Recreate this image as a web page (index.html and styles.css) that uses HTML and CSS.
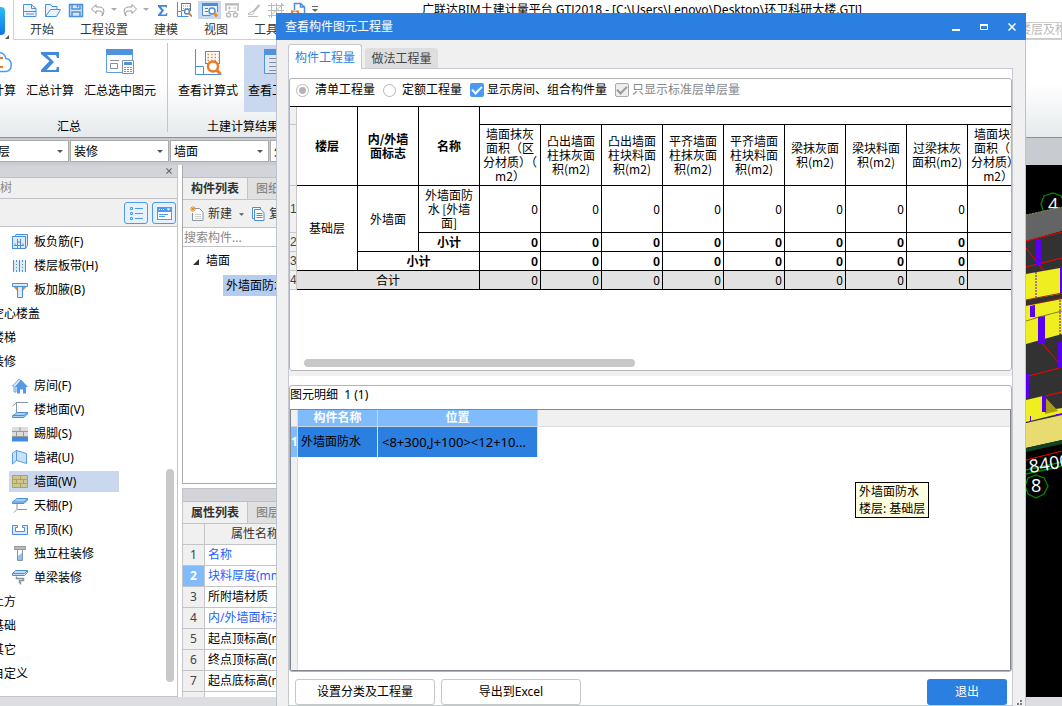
FILE: index.html
```html
<!DOCTYPE html>
<html lang="zh-CN">
<head>
<meta charset="utf-8">
<title>广联达BIM土建计量平台 GTJ2018</title>
<link rel="stylesheet" href="styles.css">
</head>
<body>
<div class="app">
  <header class="top">
    <div class="logo">
      <svg width="14" height="40" viewBox="0 0 14 40"><defs><linearGradient id="lg" x1="0" y1="0" x2="0" y2="1"><stop offset="0" stop-color="#29c0f5"/><stop offset="1" stop-color="#1273e6"/></linearGradient></defs><rect x="-20" y="7" width="25" height="28" rx="4" fill="url(#lg)"/><path d="M9 35v4H5z" fill="#555"/></svg>
    </div>
    <div class="top-rows">
      <div class="quick">
        <button class="qbtn" aria-label="新建"><svg width="16" height="16" viewBox="0 0 16 16" fill="none" stroke="#4a8fdc"><path d="M1.500 14.500V2.500h8l4.500 4v8z" fill="#eaf3fd"/><path d="M9.500 2.500v4h4.500M1.500 9.500h12.500M4 12h8"/></svg></button>
        <button class="qbtn" aria-label="打开"><svg width="18" height="16" viewBox="0 0 18 16" fill="none" stroke="#4a8fdc"><path d="M1.500 14.500v-12h5l1.500 2h5v3M1.500 14.500l5-7h10l-4 7z" fill="#eaf3fd"/></svg></button>
        <button class="qbtn" aria-label="保存"><svg width="16" height="16" viewBox="0 0 16 16" fill="none" stroke="#4a8fdc" stroke-width="1.500"><path d="M1.500 2.500h13v12h-13z" fill="#d9e9fb"/><path d="M4 2.500v4.500h8V2.500M4 14.500V10h8v4.500M9.500 3v2.500"/></svg></button>
        <button class="qbtn" aria-label="撤销"><svg width="16" height="16" viewBox="0 0 16 16" fill="none" stroke="#999"><path d="M6 2.500L1.500 7 6 11.500V9h3.500c2.500 0 3.500 1.500 2.500 5 3-4 2.500-9-2.500-9H6z"/></svg></button>
        <svg class="caret tight" width="6" height="4" viewBox="0 0 6 4"><path d="M0 0h6L3 3z" fill="#aaa"/></svg>
        <button class="qbtn" aria-label="重做"><svg width="16" height="16" viewBox="0 0 16 16" fill="none" stroke="#999"><path d="M10 2.500L14.500 7 10 11.500V9H6.500C4 9 3 10.500 4 14c-3-4-2.500-9 2.500-9H10z"/></svg></button>
        <svg class="caret tight" width="6" height="4" viewBox="0 0 6 4"><path d="M0 0h6L3 3z" fill="#aaa"/></svg>
        <button class="qbtn" aria-label="汇总"><svg width="16" height="16" viewBox="0 0 16 16"><path d="M4 3h9v2.500h-1l-.5-.8H7l3 3.800-3 4h4.800l.7-1.500h1L13 14H4v-1.200l3.500-4.300L4 4.800z" fill="#3f86da"/></svg></button>
        <button class="qbtn" aria-label="查看计算式"><svg width="16" height="16" viewBox="0 0 16 16" fill="none" stroke="#4a8fdc"><path d="M1.500 0v14.500h11M1.500 9.500h4v5"/><rect x="5.500" y="1.500" width="9" height="7" stroke="#777"/><path d="M7 4h7M7 6.500h7" stroke="#f08030" stroke-dasharray="1 1"/><circle cx="11" cy="9.500" r="2.500" fill="#fff" stroke="#4a8fdc" stroke-width="1.500"/><path d="M13 11.500l3 3" stroke="#f07a20" stroke-width="2"/></svg></button>
        <button class="qbtn on" aria-label="查看工程量"><svg width="16" height="16" viewBox="0 0 16 16" fill="none" stroke="#4a8fdc"><path d="M.5 13.500V1.500h15V10M.5 13.500h8" fill="#eaf3fd"/><path d="M0 2.500h16" stroke-width="3"/><path d="M3 6.500h3M3 9.500h3" stroke="#777"/><circle cx="10" cy="9" r="3" fill="#fff" stroke-width="1.500"/><path d="M12 11l3 3.500" stroke="#f09020" stroke-width="3"/></svg></button>
        <button class="qbtn" aria-label="查看报表"><svg width="16" height="16" viewBox="0 0 16 16" fill="none" stroke="#bbb"><path d="M2 9V2h12v7" stroke-width="1.500"/><path d="M1 2.500h14" stroke-width="2"/><path d="M4 6h3M9 6h3M5.500 4.500v3M4 9.500h8"/><circle cx="4.500" cy="13" r="2" stroke-width="1.500"/><circle cx="11.500" cy="13" r="2" stroke-width="1.500"/></svg></button>
        <button class="qbtn" aria-label="格式刷"><svg width="16" height="16" viewBox="0 0 16 16" fill="none" stroke="#bbb"><path d="M13.500 3L7 10" stroke-width="2"/><path d="M7 9l-5 3 4 .5L8 11M2 14.500h10"/></svg></button>
        <button class="qbtn" aria-label="轴网"><svg width="16" height="16" viewBox="0 0 16 16" fill="none" stroke="#bbb"><path d="M0 3.500h16M0 8.500h16M0 13.500h16M3.500 1v15M8.500 1v15M13.500 1v15M1 15L15 2"/></svg></button>
        <button class="qbtn" aria-label="导出"><svg width="16" height="16" viewBox="0 0 16 16" fill="none" stroke="#4a8fdc"><path d="M4.500 8V1.500h6l4 3.500v9h-4M10.500 1.500V5h4" stroke-width="1.500"/><rect x="1" y="8.500" width="8" height="6" fill="#f07a20" stroke="none"/><path d="M3 10.500h4M5 9v5" stroke="#fff"/></svg></button>
        <svg class="caret" width="6" height="7" viewBox="0 0 6 7"><path d="M0 .5h6" stroke="#666"/><path d="M0 3h6L3 6z" fill="#666"/></svg>
        <div class="app-title">广联达BIM土建计量平台 GTJ2018 - [C:\Users\Lenovo\Desktop\环卫科研大楼.GTJ]</div>
      </div>
      <nav class="menu">
        <a href="#">开始</a><a href="#">工程设置</a><a href="#">建模</a><a href="#">视图</a><a href="#">工具</a>
        <input class="find" type="text" aria-label="查找" placeholder="搜索楼层及构件">
      </nav>
    </div>
  </header>

  <section class="ribbon">
    <div class="group first">
      <div class="group-row">
        <button class="rbtn"><svg width="32" height="28" viewBox="0 0 32 28" fill="none" stroke="#4a9bef" stroke-width="1.500"><path d="M8 22.500a6 6 0 0 1 0-12C9 1 22 1 24 9.500c7 1 7 12 0 13z" fill="#fff"/><path d="M21 9h-6v9h6" stroke="#f07a20" stroke-width="2"/></svg>云计算</button>
        <button class="rbtn"><svg width="28" height="28" viewBox="0 0 28 28"><path d="M5 3h18v6h-2l-1-3H11l7 7-7.500 8H20l1-3h2v5H5v-2l8.500-9L5 5z" fill="#4288db"/></svg>汇总计算</button>
        <button class="rbtn"><svg width="28" height="28" viewBox="0 0 28 28" fill="none"><path d="M.5 23.500V5M.5 23.500H16M26.500 5v6" stroke="#5b9de6"/><path d="M0 0h27v6H0z" fill="#4f93df"/><path d="M4 11.500h9M4.500 14.500h7v5h-7z" stroke="#85909c"/><path d="M16.500 11.500h11v13h-11z" fill="#fff" stroke="#85909c"/><path d="M18 13h8v3h-8z" fill="#4f93df"/><path d="M18 18.500h8M18 20.500h8M18 22.500h8" stroke="#85909c" stroke-dasharray="2 1"/></svg>汇总选中图元</button>
      </div>
      <div class="group-label">汇总</div>
    </div>
    <div class="group second">
      <div class="group-row">
        <button class="rbtn"><svg width="28" height="28" viewBox="0 0 28 28" fill="none" stroke="#4a8fdc"><path d="M1.500 0v25.500h26M1.500 17.500h8v8"/><rect x="11.500" y="2.500" width="14" height="12" stroke="#4a8fdc"/><path d="M13.500 5.500h11M13.500 8.500h11M13.500 11.500h11" stroke="#f08040" stroke-width="1.500" stroke-dasharray="1.500 2"/><circle cx="19" cy="17.500" r="5" fill="#fff" stroke="#f07a20" stroke-width="2.500"/><path d="M22.500 21l4 4" stroke="#f07a20" stroke-width="3"/></svg>查看计算式</button>
        <button class="rbtn on"><svg width="28" height="28" viewBox="0 0 28 28" fill="none"><path d="M.5 24.500V1h27v23.500z" fill="#dce8f7" stroke="#4f93df"/><path d="M0 0h28v6H0z" fill="#4f93df"/><path d="M5 9.500h18M5 13.500h18M5 17.500h18M5 21.500h18" stroke="#85909c"/></svg>查看工程量</button>
      </div>
      <div class="group-label">土建计算结果</div>
    </div>
  </section>

  <div class="filters">
    <label class="combo first"><select aria-label="楼层"><option>基础层</option></select></label>
    <label class="combo"><select aria-label="类别"><option>装修</option></select></label>
    <label class="combo"><select aria-label="构件类型"><option>墙面</option></select></label>
    <label class="combo"><select aria-label="构件"><option>外墙面防水</option></select></label>
  </div>

  <main class="work">
    <aside class="panel nav">
      <div class="strip"><button class="x" aria-label="关闭"><svg width="6" height="6" viewBox="0 0 7 7"><path d="M.5.5l6 6M6.500.5l-6 6" stroke="#666" stroke-width="1.300"/></svg></button></div>
      <div class="nav-title">导航树</div>
      <div class="nav-tools">
        <button class="tool" aria-label="列表"><svg width="22" height="20" viewBox="0 0 22 20" fill="none" stroke="#4a9bef"><path d="M5.500 4.500h2v2h-2zM5.500 9.500h2v2h-2zM5.500 14.500h2v2h-2zM10 5.500h8M10 10.500h8M10 15.500h8"/></svg></button>
        <button class="tool" aria-label="窗口"><svg width="22" height="20" viewBox="0 0 22 20" fill="none"><rect x="4.500" y="4.500" width="14" height="12" fill="#fff" stroke="#4a9bef"/><path d="M4 4h15v5H4z" fill="#4a9bef"/><path d="M6 6.500h6" stroke="#fff" stroke-dasharray="1 1"/><path d="M13.500 5.500h4l-2 2z" fill="#fff"/><path d="M6 11.500h9M6 13.500h6" stroke="#4a9bef"/></svg></button>
      </div>
      <div class="tree-area">
      <ul class="tree">
        <li><svg viewBox="0 0 16 16" fill="#dceafa" stroke="#4a8fdc"><path d="M3 2.500L4 .5h11.500v11l-2 3"/><rect x=".5" y="2.500" width="13" height="12"/><path d="M2 11.500h10M3 9.500v2M5.500 5v9M8.500 5v9M11 9.500v2M5.500 8h3"/></svg>板负筋(F)</li>
        <li><svg viewBox="0 0 16 16" fill="#dceafa" stroke="#4a8fdc"><rect x="1.500" y="2.500" width="12" height="11" stroke="none"/><path d="M1.500 2v12M7.500 2v12M13.500 2v12"/><path d="M1 2.500h13M1 13.500h13M4.500 3v10M10.500 3v10" stroke-dasharray="1 2"/></svg>楼层板带(H)</li>
        <li><svg viewBox="0 0 16 16"><path d="M1 4h5v6zM15 4h-5v6z" fill="#f08a20"/><path d="M.5 1.500h15v3h-15zM5.500 4.500h5v11h-5z" fill="#dceafa" stroke="#4a8fdc"/></svg>板加腋(B)</li>
        <li class="cat">空心楼盖</li>
        <li class="cat">楼梯</li>
        <li class="cat">装修</li>
        <li><svg viewBox="0 0 16 16"><path d="M.5 8L7 1l2 2-5 5v6H2V8z" fill="#dceafa" stroke="#6aa5e8"/><path d="M3 9l6-7.500L16 9h-2v6.500h-3v-4H8v4H5V9z" fill="#559ae8"/></svg>房间(F)</li>
        <li><svg viewBox="0 0 16 16" fill="none"><path d="M16 .5H4.500L.5 4M4.500.5v10" stroke="#8795a3"/><path d="M5 10.500h10.500v1.500l-3.500 3.500H.5V14z" fill="#a9d0f7" stroke="#4a8fdc"/><path d="M.5 13.500H12l3.500-3" stroke="#4a8fdc"/></svg>楼地面(V)</li>
        <li><svg viewBox="0 0 16 16"><path d="M0 1h16v10H0z" fill="#ddd"/><path d="M0 5.500h16M0 10.500h16M4.500 6v4.500M11.500 6v4.500M8 1v4.500" stroke="#9a9a9a" fill="none"/><path d="M0 11h16v4.500H0z" fill="#3f8be2"/></svg>踢脚(S)</li>
        <li><svg viewBox="0 0 16 16" fill="#c9e0f9" stroke="#5a9ae0"><path d="M.5 3l4-2.500v10L.5 14zM4.500.500l10 3v10l-10-3z"/></svg>墙裙(U)</li>
        <li class="sel"><svg viewBox="0 0 16 16" fill="#cbc794" stroke="#b7a14d"><path d="M.5 1.500h15v12H.5z"/><path d="M.5 5.500h15M.5 9.500h15M8.500 1.500v4M4.500 5.500v4M11.500 5.500v4M8.500 9.500v4" fill="none"/></svg>墙面(W)</li>
        <li><svg viewBox="0 0 16 16" fill="none"><path d="M5 5v6.500h10M5 11.500l-3 3" stroke="#8795a3"/><path d="M.5 4L5 .5h10.500V2L12 5.500H.5z" fill="#a9d0f7" stroke="#4a8fdc"/><path d="M.5 4H12l3.500-3" stroke="#4a8fdc"/></svg>天棚(P)</li>
        <li><svg viewBox="0 0 16 16" fill="#dceafa" stroke="#4a8fdc"><path d="M.5 3.500h5v2h-2v4h9v-4h-2v-2h5v9H.5z"/></svg>吊顶(K)</li>
        <li><svg viewBox="0 0 16 16" fill="none"><path d="M2.500.5h11v3h-11z" fill="#bbb" stroke="#999"/><path d="M5.500 3.500h5v11h-5z" fill="#fff" stroke="#8795a3"/><path d="M6 10l4-3v7H6z" fill="#8fc2f5"/></svg>独立柱装修</li>
        <li><svg viewBox="0 0 16 16" fill="none"><path d="M.5 3.500l3-3h12v2l-3 3H.5z" fill="#c4defa" stroke="#4a8fdc"/><path d="M.5 3.500h12l3-3" stroke="#4a8fdc"/><path d="M4.500 6.500v2h7v2h-4v2h1v2" stroke="#8795a3" stroke-width="1.500"/></svg>单梁装修</li>
        <li class="cat">土方</li>
        <li class="cat">基础</li>
        <li class="cat">其它</li>
        <li class="cat">自定义</li>
      </ul>
      <div class="scroll"></div>
      </div>
    </aside>

    <div class="middle">
      <section class="panel list">
        <div class="strip"></div>
        <div class="ptabs"><button class="on">构件列表</button><button>图纸管理</button></div>
        <div class="ptools">
          <button><svg width="14" height="16" viewBox="0 0 14 16" fill="none"><path d="M4.500 2.500h5l3.500 3.500v8.500H2.500V7" fill="#fff" stroke="#8795a3"/><path d="M5 8.500h6M5 10.500h6M5 12.500h6" stroke="#ccc"/><path d="M0 3h6M3 0v6M1 1l4 4M5 1L1 5" stroke="#f08a20"/></svg>新建<svg class="caret" width="5" height="3" viewBox="0 0 6 3"><path d="M0 0h6L3 3z" fill="#555"/></svg></button>
          <button><svg width="13" height="16" viewBox="0 0 13 16" fill="#fff" stroke="#4a8fdc"><path d="M2.500 12.500h-2V1.500h8v2"/><path d="M2.500 3.500h6l3.500 3v8H2.500z"/><path d="M4.500 7.500h6M4.500 9.500h6M4.500 11.500h6"/></svg>复制</button>
        </div>
        <input class="search" type="text" aria-label="搜索构件" placeholder="搜索构件...">
        <ul class="ctree">
          <li><svg width="6" height="6" viewBox="0 0 6 6"><path d="M6 0v6H0z" fill="#333"/></svg>墙面
            <ul><li><span class="hit">外墙面防水 [外墙面]</span></li></ul></li>
        </ul>
      </section>
      <section class="panel props">
        <div class="strip"></div>
        <div class="ptabs"><button class="on">属性列表</button><button>图层管理</button></div>
        <div class="ptable-wrap">
        <table class="ptable">
          <thead><tr><th class="no"></th><th class="pname">属性名称</th><th>属性值</th></tr></thead>
          <tbody>
            <tr><td class="no">1</td><td class="blue">名称</td><td></td></tr>
            <tr><td class="no on">2</td><td class="blue">块料厚度(mm)</td><td></td></tr>
            <tr><td class="no">3</td><td>所附墙材质</td><td></td></tr>
            <tr><td class="no">4</td><td class="blue">内/外墙面标志</td><td></td></tr>
            <tr><td class="no">5</td><td>起点顶标高(m)</td><td></td></tr>
            <tr><td class="no">6</td><td>终点顶标高(m)</td><td></td></tr>
            <tr><td class="no">7</td><td>起点底标高(m)</td><td></td></tr>
            <tr><td class="no"></td><td></td><td></td></tr>
          </tbody>
        </table>
        </div>
      </section>
    </div>

    <section class="canvas">
      <svg width="36" height="532" viewBox="1026 165 36 532">
        <g fill="none" stroke="#008a00" stroke-width="1.300"><path d="M1041 204l3-8 9-3 8 3 4 8-4 9-8 4-9-4z"/></g>
        <g class="axis" fill="#fff"><text x="1048" y="211">4</text></g>
        <path d="M1026 215l36-8v24l-36 10z" fill="#646464"/>
        <path d="M1026 215l36-8" stroke="#99905a" stroke-dasharray="2 1"/>
        <path d="M1026 241l36-9v190h-36z" fill="#323232"/>
        <path d="M1026 241l36-9M1026 267l36-9M1026 248l18 23" stroke="#f00" fill="none"/>
        <path d="M1036 239h5v26h-5z" fill="#5a00f0"/>
        <path d="M1026 274l34-6v26l-34 6z" fill="#eeee20"/>
        <path d="M1036 272v26" stroke="#5a00f0" stroke-dasharray="2 1"/>
        <path d="M1060 268h2v26h-2z" fill="#5a00f0"/>
        <path d="M1026 300l36-7M1026 306l36-8" stroke="#a02010"/>
        <path d="M1026 306l36-7v35l-36 10z" fill="#eeee20"/>
        <path d="M1035 318l27-7M1026 321l10-3" stroke="#666420" stroke-width=".8"/>
        <path d="M1030 306l5-1v12h-5zM1038 317l7-1v27h-7z" fill="#5a00f0"/>
        <path d="M1060 300v35" stroke="#5a00f0" stroke-dasharray="2 1"/>
        <path d="M1058 342h4v26h-4zM1026 374h3v24h-3z" fill="#5a00f0"/>
        <path d="M1042 343l16 19M1029 376l30-8M1045 396l17-4" stroke="#f00" fill="none"/>
        <path d="M1026 400l17-4v15l19-3v5l-36 9z" fill="#eeee20"/>
        <path d="M1045 397l13 14-13 3z" fill="#a8a010"/>
        <path d="M1042 395h4v17h-4zM1030 416h1v6h-1zM1056 414h6v2h-6z" fill="#5a00f0"/>
        <path d="M1026 423l36-8v25l-36 8z" fill="#e8dc70"/>
        <path d="M1026 448l36-8v4l-36 8z" fill="#124225"/>
        <path d="M1026 460l36-9" stroke="#f00"/>
        <g fill="none" stroke="#008a00" stroke-width="1.300"><path d="M1026 470l36-8M1026 474l36-8M1025 486l3-8 8-3 8 3 4 8-4 8-8 4-8-4z"/></g>
        <g fill="#fff" class="axis"><text x="1031" y="492">8</text><text x="1030" y="473" transform="rotate(-9 1030 473)">8400</text></g>
      </svg>
    </section>
  </main>
  <footer class="status"></footer>

  <div class="dialog" role="dialog" aria-label="查看构件图元工程量">
    <div class="dlg-title"><span>查看构件图元工程量</span>
      <div class="win">
        <button aria-label="最小化"><svg width="8" height="8" viewBox="0 0 8 8"><path d="M0 6h8v2H0z" fill="#fff"/></svg></button>
        <button aria-label="最大化"><svg width="8" height="8" viewBox="0 0 8 8"><path d="M.5 1.500h7v5h-7z" fill="none" stroke="#fff"/><path d="M0 1h8v2H0z" fill="#fff"/></svg></button>
        <button aria-label="关闭"><svg width="8" height="8" viewBox="0 0 8 8"><path d="M.5.5l7 7M7.500.5l-7 7" stroke="#fff" stroke-width="1.500"/></svg></button>
      </div>
    </div>
    <div class="dlg-body">
      <div class="dtabs"><button class="on">构件工程量</button><button>做法工程量</button></div>
      <div class="sheet">
        <section class="frame upper">
          <div class="options">
            <label><input type="radio" name="kind" checked>清单工程量</label>
            <label><input type="radio" name="kind">定额工程量</label>
            <label class="tick"><input type="checkbox" checked>显示房间、组合构件量</label>
            <label class="tick off"><input type="checkbox" checked disabled>只显示标准层单层量</label>
          </div>
          <div class="qwrap">
            <table class="qty">
              <colgroup><col class="c0"><col span="12" class="c1"></colgroup>
              <thead>
                <tr class="r1"><td class="rh"></td><th rowspan="2">楼层</th><th rowspan="2">内/外墙面标志</th><th rowspan="2">名称</th><th colspan="9"></th></tr>
                <tr class="r2"><td class="rh"></td><td>墙面抹灰<br>面积（区<br>分材质）（<br>m2）</td><td>凸出墙面<br>柱抹灰面<br>积(m2)</td><td>凸出墙面<br>柱块料面<br>积(m2)</td><td>平齐墙面<br>柱抹灰面<br>积(m2)</td><td>平齐墙面<br>柱块料面<br>积(m2)</td><td>梁抹灰面<br>积(m2)</td><td>梁块料面<br>积(m2)</td><td>过梁抹灰<br>面积(m2)</td><td>墙面块料<br>面积（区<br>分材质）（<br>m2）</td></tr>
              </thead>
              <tbody>
                <tr class="r3"><td class="rh">1</td><td rowspan="3">基础层</td><td rowspan="2">外墙面</td><td>外墙面防<br>水 [外墙<br>面]</td><td class="n">0</td><td class="n">0</td><td class="n">0</td><td class="n">0</td><td class="n">0</td><td class="n">0</td><td class="n">0</td><td class="n">0</td><td class="n">0</td></tr>
                <tr class="sum"><td class="rh">2</td><td>小计</td><td class="n">0</td><td class="n">0</td><td class="n">0</td><td class="n">0</td><td class="n">0</td><td class="n">0</td><td class="n">0</td><td class="n">0</td><td class="n">0</td></tr>
                <tr class="sum"><td class="rh">3</td><td colspan="2">小计</td><td class="n">0</td><td class="n">0</td><td class="n">0</td><td class="n">0</td><td class="n">0</td><td class="n">0</td><td class="n">0</td><td class="n">0</td><td class="n">0</td></tr>
                <tr class="total"><td class="rh">4</td><td colspan="3">合计</td><td class="n">0</td><td class="n">0</td><td class="n">0</td><td class="n">0</td><td class="n">0</td><td class="n">0</td><td class="n">0</td><td class="n">0</td><td class="n">0</td></tr>
              </tbody>
            </table>
          </div>
          <div class="hscroll"></div>
        </section>
        <div class="splitter"></div>
        <section class="frame lower">
          <div class="caption">图元明细&nbsp; 1 (1)</div>
          <div class="detail">
            <table>
              <thead><tr><th class="dh"></th><th class="d1">构件名称</th><th class="d2">位置</th><th class="rest"></th></tr></thead>
              <tbody><tr><td class="dh on">1</td><td class="cell">外墙面防水</td><td class="cell pos">&lt;8+300,J+100&gt;&lt;12+10...</td><td></td></tr>
              <tr class="fill"><td class="dh"></td><td></td><td></td><td></td></tr></tbody>
            </table>
          </div>
        </section>
        <div class="actions"><button>设置分类及工程量</button><button>导出到Excel</button><button class="exit">退出</button></div>
      </div>
      <svg class="grip" width="6" height="6" viewBox="0 0 6 6"><path d="M3 0h2v2H3zM0 3h2v2H0zM3 3h2v2H3z" fill="#778"/></svg>
    </div>
    <div class="tip" role="tooltip">外墙面防水<br>楼层: 基础层</div>
  </div>
</div>
</body>
</html>
```
FILE: styles.css
```css
* { box-sizing: border-box; }
html, body { margin: 0; height: 100%; overflow: hidden; }
body { font: 12px/18px "Noto Sans", "Noto Sans CJK SC", sans-serif; color: #000; }
button, input, select { font: inherit; color: inherit; margin: 0; padding: 0; border: 0; background: none; border-radius: 0; }
svg { display: block; flex: none; }
ul { list-style: none; margin: 0; padding: 0; }
table { border-collapse: separate; border-spacing: 0; }
th, td { padding: 0; }

.app { position: relative; height: 100vh; display: flex; flex-direction: column; background: #fff; overflow: hidden; }

/* title, quick access and menu */
.top { display: flex; height: 40px; flex: none; }
.logo { width: 14px; border-right: 1px solid #d0d0d0; }
.top-rows { flex: 1; min-width: 0; border-bottom: 1px solid #d0d0d0; }
.quick { display: flex; align-items: center; gap: 6px; height: 19px; padding-left: 8px; }
.qbtn { height: 18px; display: flex; align-items: center; }
.qbtn.on { width: 23px; justify-content: center; background: #c9d8ef; margin-right: -3px; }
.tight { margin: 0 -1px; }
.app-title { margin-left: 98px; white-space: nowrap; }
.menu { display: flex; align-items: center; gap: 26px; height: 20px; padding: 2px 0 0 16px; color: #333; }
.menu a { color: inherit; text-decoration: none; white-space: nowrap; }
.find { margin-left: auto; width: 68px; height: 17px; border: 1px solid #ccc; }
.find::placeholder { color: #bbb; opacity: 1; }

/* ribbon */
.ribbon { display: flex; height: 98px; flex: none; border-bottom: 1px solid #8c9096; background: linear-gradient(#fff 45%, #e6eaec); }
.group { display: flex; flex-direction: column; padding: 5px 6px 0; }
.group.first { width: 195px; margin-left: -27px; padding-left: 3px; position: relative; }
.group.first::after { content: ""; position: absolute; right: 0; top: 3px; bottom: 5px; width: 1px; background: #c4c6c8; }
.group-row { display: flex; gap: 2px; height: 73px; align-items: flex-start; }
.rbtn { height: 67px; padding: 4px; display: flex; flex-direction: column; align-items: center; gap: 5px; white-space: nowrap; }
.rbtn.on { background: #c9d8ef; }
.group-label { text-align: center; }

.filters { display: flex; gap: 1px; height: 27px; flex: none; padding: 2px 0 3px; background: #c8cbd0; }
.combo { width: 99px; flex: none; border: 1px solid #aaa; background: #fff; position: relative; }
.combo.first { margin-left: -30px; }
.combo select { width: 100%; height: 21px; padding-left: 3px; appearance: none; }
.combo::after { content: ""; position: absolute; right: 5px; top: 9px; border: 3px solid transparent; border-top-color: #555; border-bottom: 0; }

/* docked panels */
.work { flex: 1; min-height: 0; display: grid; grid-template-columns: 178px 250px 1fr; gap: 4px; background: #fff; }
.panel { display: flex; flex-direction: column; min-height: 0; }
.strip { height: 13px; flex: none; background: #d2d4d9; border-bottom: 1px solid #c0c0c4; }
.nav { border-right: 1px solid #c4c4c8; border-bottom: 1px solid #c4c4c8; overflow: hidden; }
.nav .strip { display: flex; justify-content: flex-end; align-items: center; padding-right: 5px; }
.nav-title { height: 21px; margin-left: -24px; padding-top: 1px; flex: none; background: #f0f0f0; border-bottom: 1px solid #c4c4c8; color: #888; }
.nav-tools { display: flex; justify-content: flex-end; gap: 4px; flex: none; height: 28px; padding: 3px 1px; background: #f0f0f0; border-bottom: 1px solid #c4c4c8; }
.tool { width: 24px; height: 22px; border: 1px solid #4a9bef; border-radius: 3px; background: #e6f1fd; }
.tree-area { display: flex; justify-content: space-between; flex: 1; min-height: 0; padding-top: 2px; }
.tree { flex: none; }
.tree li { display: flex; align-items: center; gap: 6px; height: 21px; margin: 2px 0 3px 9px; padding-left: 3px; width: 110px; white-space: nowrap; }
.tree svg { width: 16px; height: 16px; }
.tree .cat { margin-left: -11px; }
.tree .sel { background: #c9d8ef; }
.scroll { width: 8px; margin: 240px 3px 14px 0; border-radius: 4px; background: #c8c8c8; }

.middle { display: flex; flex-direction: column; gap: 4px; min-height: 0; overflow: hidden; }
.panel.list { flex: none; height: 319px; border: 1px solid #aaa; border-top: 0; }
.panel.props { flex: 1; border: 1px solid #c4c4c8; border-bottom: 0; }
.ptabs { display: flex; flex: none; height: 22px; background: #e0e0e0; border-bottom: 1px solid #c4c4c8; }
.ptabs button { width: 65px; border-right: 1px solid #c4c4c8; color: #888; font-weight: 500; }
.ptabs .on { background: #f0f0f0; color: #333; font-weight: bold; }
.ptools { display: flex; flex: none; gap: 8px; height: 28px; padding: 1px 0 0 7px; background: #f0f0f0; border-bottom: 1px solid #c4c4c8; color: #333; }
.ptools button { display: flex; align-items: center; gap: 4px; }
.ptools .caret { margin-left: 3px; }
.search { flex: none; height: 19px; padding-left: 1px; border-bottom: 1px solid #c4c4c8; }
.search::placeholder { color: #888; opacity: 1; }
.ctree { padding: 4px 0 0 10px; }
.ctree > li { line-height: 20px; }
.ctree > li > svg { display: inline-block; margin-right: 7px; }
.ctree ul { padding: 4px 0 0 30px; white-space: nowrap; }
.hit { display: block; padding-left: 3px; background: #b4ccef; line-height: 21px; }

.ptable-wrap { flex: 1; min-height: 0; overflow: hidden; }
.ptable { width: 100%; table-layout: fixed; }
.ptable th, .ptable td { height: 21px; line-height: 18px; border: solid #c4c4c8; border-width: 0 1px 1px 0; font-weight: normal; padding-left: 3px; white-space: nowrap; overflow: hidden; }
.ptable th { background: #f0f0f0; color: #333; }
.ptable .no { width: 22px; padding: 0; text-align: center; background: #f0f0f0; color: #444; }
.ptable .pname { width: 98px; }
.ptable .no.on { background: #80bbfb; color: #fff; font-weight: bold; }
.ptable .blue { color: #1f5fff; }

.canvas { background: #000; display: flex; justify-content: flex-end; overflow: hidden; }
.axis { font: 18px "Open Sans", sans-serif; }
.status { height: 9px; flex: none; background: #dddee1; }

/* quantity dialog, floats over the workspace */
.dialog { position: absolute; top: 13px; left: 276px; right: 36px; bottom: 0; display: flex; flex-direction: column; background: #f0f0f0; }
.dlg-title { display: flex; align-items: center; justify-content: space-between; height: 27px; flex: none; padding: 0 10px 0 9px; background: #2b7fe0; color: #fff; }
.win { display: flex; gap: 20px; }
.win button { width: 8px; height: 8px; }
.dlg-body { flex: 1; min-height: 0; display: flex; flex-direction: column; position: relative; padding: 4px 12px 0 11px; border: solid #bcc4d0; border-width: 0 1px; }
.dtabs { display: flex; align-items: flex-end; gap: 3px; height: 25px; flex: none; margin-bottom: -1px; z-index: 1; }
.dtabs button { height: 20px; width: 73px; margin-bottom: 1px; background: #dedede; border-radius: 3px 3px 0 0; color: #444; padding-top: 1px; }
.dtabs .on { height: 25px; width: 74px; margin: 0; padding-top: 2px; border: 1px solid #c4c8d0; border-bottom: 0; background: #fff; color: #2b7fe0; }
.sheet { flex: 1; min-height: 0; display: flex; flex-direction: column; padding-top: 9px; border: 1px solid #c4c8d0; background: #fff; }
.frame { border: 1px solid #b4b4b8; border-radius: 3px; min-width: 0; display: flex; flex-direction: column; overflow: hidden; }
.upper { flex: none; height: 293px; }
.splitter { height: 5px; flex: none; background: #f0f0f0; margin-bottom: 9px; }
.lower { flex: 1; min-height: 0; }

.options { display: flex; align-items: center; height: 27px; flex: none; padding: 0 0 5px 6px; gap: 8px; }
.options label { display: flex; align-items: center; gap: 6px; white-space: nowrap; }
.options .tick { gap: 3px; }
.options .off { color: #888; }
.options input { appearance: none; width: 13px; height: 13px; border: 1px solid #b8b8b8; border-radius: 50%; background: #fff; }
.options input[type=radio]:checked { background: radial-gradient(#b4b4b4 3px, #fff 4px); }
.options .tick input { width: 14px; height: 14px; border: 0; border-radius: 2px; background: #4a9bef; display: grid; place-items: center; }
.options .tick input::after { content: ""; width: 8px; height: 4px; margin-top: -3px; border: solid #fff; border-width: 0 0 2px 2px; transform: rotate(-45deg); }
.options .off input { background: #eee; border: 1px solid #aaa; }
.options .off input::after { border-color: #999; }

.qwrap { flex: 1; min-height: 0; overflow: hidden; }
.qty { table-layout: fixed; width: 739px; border-top: 1px solid #000; line-height: 14px; font-family: "Noto Sans CJK SC", sans-serif; }
.c0 { width: 7px; }
.c1 { width: 61px; }
.qty th, .qty td { border: solid #000; border-width: 0 1px 1px 0; text-align: center; vertical-align: middle; overflow: hidden; white-space: nowrap; }
.qty th { white-space: normal; padding: 0 6px; }
.qty .rh { border-color: #c8c8c8; background: #f0f0f0; color: #444; font: 12px/14px "Liberation Sans", sans-serif; }
.qty .n { text-align: right; padding-right: 2px; }
.r1 { height: 18px; }
.r2 { height: 61px; }
.r3 { height: 47px; }
.sum, .total { height: 19px; }
.sum { font-weight: bold; }
.total td { background: #e2e2e2; }
.hscroll { height: 8px; flex: none; width: 331px; margin: 0 0 3px 14px; border-radius: 4px; background: #c8c8c8; }

.caption { height: 23px; flex: none; }
.detail { flex: 1; min-height: 0; border: 1px solid #858590; }
.detail table { width: 100%; height: 100%; table-layout: fixed; }
.detail th { height: 17px; line-height: 16px; background: #80bbfb; color: #fff; border-right: 1px solid #c8d4e0; border-bottom: 1px solid #c8d4e0; }
.detail td { height: 30px; }
.detail .dh { width: 7px; background: #f0f0f0; border-right: 1px solid #ddd; overflow: hidden; }
.detail .dh.on { background: #80bbfb; color: #fff; font-weight: bold; }
.d1 { width: 80px; }
.d2 { width: 160px; }
.detail .rest { background: #f0f0f0; border-right: 0; border-color: #ddd; }
.detail .cell { background: #2b7fe0; border-right: 1px solid #dde6f0; padding-left: 3px; white-space: nowrap; overflow: hidden; }
.detail .pos { font-size: 13px; padding-left: 4px; }
.detail .fill td { height: auto; }

.actions { display: flex; gap: 6px; flex: none; padding: 7px 5px 0 6px; }
.actions button { width: 140px; height: 26px; border: 1px solid #c8c8c8; border-radius: 3px; background: #fff; }
.actions .exit { width: 80px; margin-left: auto; border: 0; background: #2b7fe0; color: #fff; }
.grip { position: absolute; right: 2px; bottom: 0; }
.tip { position: absolute; left: 579px; top: 469px; padding: 0 3px; border: 1px solid #000; background: #ffffe1; line-height: 17px; white-space: nowrap; }
```
